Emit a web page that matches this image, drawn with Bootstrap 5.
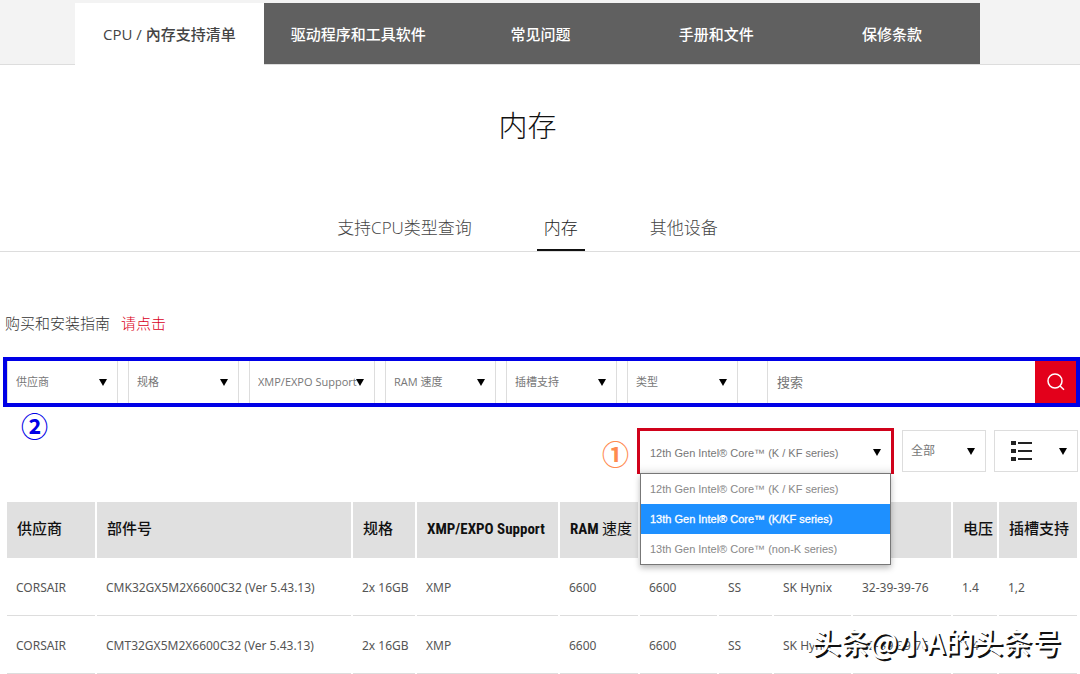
<!DOCTYPE html>
<html lang="zh-CN">
<head>
<meta charset="utf-8">
<meta name="viewport" content="width=device-width, initial-scale=1">
<title>内存</title>
<link rel="stylesheet" href="https://cdn.jsdelivr.net/npm/bootstrap@5.3.0/dist/css/bootstrap.min.css">
<script defer src="https://cdn.jsdelivr.net/npm/bootstrap@5.3.0/dist/js/bootstrap.bundle.min.js"></script>
<style>
  body { font-family: "Noto Sans", "Noto Sans CJK SC", sans-serif; font-size: 12px; line-height: 18px; color: #555; background: #fff; overflow-x: hidden; }
  a { text-decoration: none; }
  .topbar { background: #f3f3f3; border-bottom: 1px solid #ddd; padding: 3px 100px 0 75px; }
  .topbar a { flex: 176 1 0; height: 61px; background: #606060; color: #fff; font-size: 15px; font-weight: 500; }
  .topbar a.wide { flex-grow: 189; }
  .topbar a.active { background: #fff; color: #444; margin-bottom: -1px; height: 62px; font-family: "Open Sans", "Noto Sans CJK TC", sans-serif; }
  .shifted { padding-right: 25px; }
  .page-title { font-size: 29px; line-height: 40px; font-weight: 300; color: #111; margin: 41px 0 0; }
  .subtabs { margin-top: 61px; border-bottom: 1px solid #ddd; gap: 58px; font-family: "Open Sans", "Noto Sans CJK SC", sans-serif; }
  .subtabs a { font-size: 17px; line-height: 24px; font-weight: 300; color: #444; padding: 9px 7px; border-bottom: 2px solid transparent; }
  .subtabs a.active { color: #222; border-color: #111; }
  .guide { font-size: 15px; line-height: 22px; font-weight: 300; color: #333; padding: 60px 5px 0; gap: 11px; }
  .guide a { color: #d9001b; }
  .filters { margin: 23px 0 0 3px; border: 4px solid #0000e6; height: 50px; gap: 10px; }
  .pick { appearance: none; border: 1px solid #ddd; border-radius: 0; color: #777; background: #fff url("data:image/svg+xml,%3Csvg xmlns='http://www.w3.org/2000/svg' viewBox='0 0 8 7'%3E%3Cpath d='M0 0h8L4 7z'/%3E%3C/svg%3E") right 10px center / 8px 7px no-repeat; padding: 0 18px 0 8px; }
  .filters .pick { font-family: "Open Sans", "Noto Sans CJK SC", sans-serif; width: 111px; font-size: 11px; border-width: 0 1px; }
  .filters .pick.long { width: 126px; padding-right: 8px; }
  .finder { margin-left: 19px; }
  .finder input { border: 0; border-left: 1px solid #ddd; padding: 0 9px; font-size: 13px; min-width: 0; }
  .finder input::placeholder { color: #757575; }
  .finder button { width: 41px; border: 0; background: #e3001b; }
  .note { font-size: 27px; line-height: 30px; font-weight: 700; }
  .note-blue { color: #0000e6; padding-top: 5px; }
  .note-orange { color: #ff8a50; }
  .tools { padding: 0 2px 0 21px; height: 95px; }
  .gen { width: 257px; height: 46px; border: 3px solid #d0021b; border-bottom: 0; margin-top: 21px; }
  .gen .pick { font-family: "Liberation Sans", sans-serif; font-size: 11px; border: 0; padding-left: 10px; box-shadow: inset 0 -10px 8px -8px #ddd; }
  .options { top: 42px; left: 0; right: 0; border: 1px solid #777; background: #fff; z-index: 5; box-shadow: 0 3px 6px #0004; font: 11px/30px "Liberation Sans", sans-serif; color: #888; }
  .options li { padding: 0 9px; }
  .options li.chosen { background: #1e90ff; color: #fff; -webkit-text-stroke: 0.3px #fff; }
  .small-pick { width: 84px; height: 42px; margin-top: 23px; }
  .specs { table-layout: fixed; width: 100%; border-collapse: separate; border-spacing: 2px 0; }
  .specs-wrap { padding: 0 1px 0 5px; }
  .specs th { background: #e0e0e0; height: 56px; padding: 0 10px 2px; color: #111; font-family: "Roboto Condensed", "Liberation Sans Narrow", "Noto Sans CJK SC", sans-serif; font-size: 15px; font-weight: 700; white-space: nowrap; }
  .specs th.han { font-weight: 500; }
  .specs th span { font-weight: 400; }
  .specs td { height: 58px; padding: 3px 9px 0; border-bottom: 1px solid #ddd; white-space: nowrap; }
  .stamp { right: 19px; top: 622px; font: 500 29px/38px "Noto Sans CJK SC", sans-serif; color: #fff; text-shadow: 2px 2px 0 #111; }
</style>
</head>
<body class="position-relative">
<nav class="topbar d-flex" aria-label="支持">
  <a href="#" class="wide active d-flex align-items-center justify-content-center">CPU / 內存支持清单</a>
  <a href="#" class="wide d-flex align-items-center justify-content-center">驱动程序和工具软件</a>
  <a href="#" class="d-flex align-items-center justify-content-center">常见问题</a>
  <a href="#" class="d-flex align-items-center justify-content-center">手册和文件</a>
  <a href="#" class="d-flex align-items-center justify-content-center">保修条款</a>
</nav>
<main>
  <h1 class="page-title shifted text-center">内存</h1>
  <nav class="subtabs shifted d-flex justify-content-center" aria-label="类型">
    <a href="#">支持CPU类型查询</a>
    <a href="#" class="active">内存</a>
    <a href="#">其他设备</a>
  </nav>
  <p class="guide d-flex mb-0"><span>购买和安装指南</span><a href="#">请点击</a></p>

  <form class="filters d-flex" onsubmit="return false">
    <select class="pick flex-shrink-0" aria-label="供应商"><option>供应商</option></select>
    <select class="pick flex-shrink-0" aria-label="规格"><option>规格</option></select>
    <select class="pick long flex-shrink-0" aria-label="XMP/EXPO Support"><option>XMP/EXPO Support</option></select>
    <select class="pick flex-shrink-0" aria-label="RAM 速度"><option>RAM 速度</option></select>
    <select class="pick flex-shrink-0" aria-label="插槽支持"><option>插槽支持</option></select>
    <select class="pick flex-shrink-0" aria-label="类型"><option>类型</option></select>
    <div class="finder d-flex flex-grow-1">
      <input class="flex-grow-1" type="text" placeholder="搜索" aria-label="搜索">
      <button type="submit" class="p-0 d-flex align-items-center justify-content-center" aria-label="搜索">
        <svg width="18" height="18" viewBox="0 0 18 18" fill="none" stroke="#fff" stroke-width="1.5"><circle cx="8" cy="8" r="7"/><path d="M12.8 12.8l4.2 4"/></svg>
      </button>
    </div>
  </form>

  <div class="tools d-flex align-items-start">
    <span class="note note-blue me-auto">②</span>
    <span class="note note-orange align-self-center me-2">①</span>
    <div class="gen position-relative">
      <select class="pick w-100 h-100" aria-label="CPU"><option>12th Gen Intel® Core™ (K / KF series)</option></select>
      <ul class="options list-unstyled mb-0 position-absolute">
        <li>12th Gen Intel® Core™ (K / KF series)</li>
        <li class="chosen">13th Gen Intel® Core™ (K/KF series)</li>
        <li>13th Gen Intel® Core™ (non-K series)</li>
      </ul>
    </div>
    <select class="pick small-pick ms-2" aria-label="全部"><option>全部</option></select>
    <button type="button" class="pick small-pick ms-2 d-flex align-items-center" aria-label="列表">
      <svg class="ms-2" width="22" height="20" viewBox="0 0 22 20" fill="#222"><path d="M0 0h5v4H0zM0 8h5v4H0zM0 16h5v4H0zM7 1h14v2H7zM7 9h14v2H7zM7 17h14v2H7z"/></svg>
    </button>
  </div>

  <div class="specs-wrap">
    <table class="specs">
      <colgroup>
        <col style="width:88px"><col style="width:254px"><col style="width:62px"><col style="width:141px"><col style="width:78px"><col style="width:77px"><col style="width:53px"><col style="width:77px"><col style="width:98px"><col style="width:44px"><col style="width:78px">
      </colgroup>
      <thead>
        <tr><th class="han">供应商</th><th class="han">部件号</th><th class="han">规格</th><th>XMP/EXPO Support</th><th>RAM <span>速度</span></th><th></th><th></th><th></th><th></th><th class="han">电压</th><th class="han">插槽支持</th></tr>
      </thead>
      <tbody>
        <tr><td>CORSAIR</td><td>CMK32GX5M2X6600C32 (Ver 5.43.13)</td><td>2x 16GB</td><td>XMP</td><td>6600</td><td>6600</td><td>SS</td><td>SK Hynix</td><td>32-39-39-76</td><td>1.4</td><td>1,2</td></tr>
        <tr><td>CORSAIR</td><td>CMT32GX5M2X6600C32 (Ver 5.43.13)</td><td>2x 16GB</td><td>XMP</td><td>6600</td><td>6600</td><td>SS</td><td>SK Hynix</td><td>32-39-39-76</td><td>1.4</td><td>1,2</td></tr>
      </tbody>
    </table>
  </div>
</main>
<div class="stamp position-absolute">头条@小A的头条号</div>
</body>
</html>
